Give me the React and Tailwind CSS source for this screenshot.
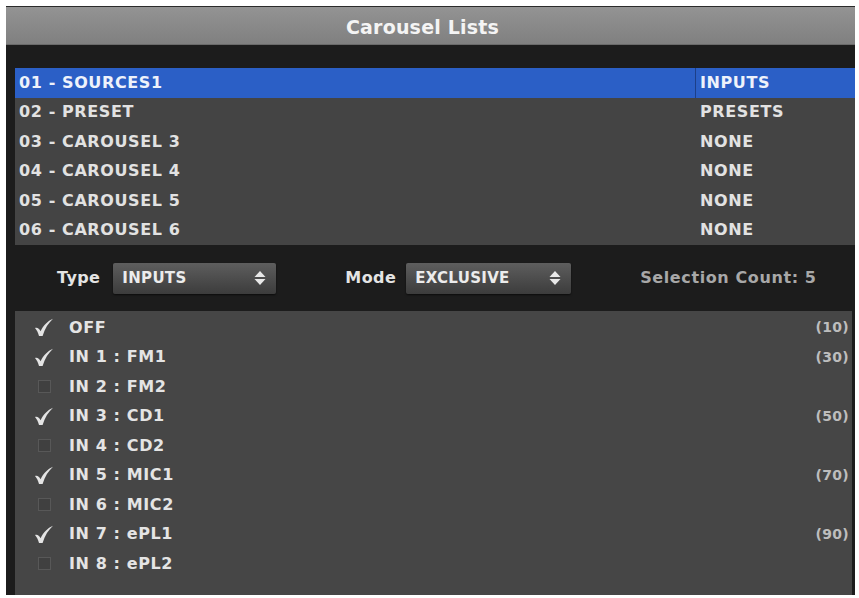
import React from 'react';

const lists = [
    { name: '01 - SOURCES1', type: 'INPUTS', selected: true },
    { name: '02 - PRESET', type: 'PRESETS' },
    { name: '03 - CAROUSEL 3', type: 'NONE' },
    { name: '04 - CAROUSEL 4', type: 'NONE' },
    { name: '05 - CAROUSEL 5', type: 'NONE' },
    { name: '06 - CAROUSEL 6', type: 'NONE' },
];

const inputs = [
    { label: 'OFF', on: true, value: '(10)' },
    { label: 'IN 1 : FM1', on: true, value: '(30)' },
    { label: 'IN 2 : FM2', on: false },
    { label: 'IN 3 : CD1', on: true, value: '(50)' },
    { label: 'IN 4 : CD2', on: false },
    { label: 'IN 5 : MIC1', on: true, value: '(70)' },
    { label: 'IN 6 : MIC2', on: false },
    { label: 'IN 7 : ePL1', on: true, value: '(90)' },
    { label: 'IN 8 : ePL2', on: false },
];

function Arrows() {
    return (
        <svg width="14" height="16" viewBox="0 0 14 16">
            <path d="M7 1 L12.5 7 H1.5 Z" fill="#e8e8e8" />
            <path d="M7 15 L12.5 9 H1.5 Z" fill="#e8e8e8" />
        </svg>
    );
}

function Check() {
    return (
        <svg width="20" height="19" viewBox="0 0 20 19">
            <path d="M1 10 C3.5 9.2 5.2 10.8 6.6 13.2 C9.5 7.5 13.5 3 19 0.8 C14.5 5 10.8 10.5 8.6 18 L5 18 C4.2 14.8 2.8 12 1 10 Z" fill="#e4e4e4" />
        </svg>
    );
}

function Select({ value, width }) {
    return (
        <div className={`flex items-center justify-between h-[31px] pl-[9px] pr-[9px] rounded-[2px] bg-gradient-to-b from-[#5e5e5e] to-[#3c3c3c] shadow-[0_1px_2px_rgba(0,0,0,0.6)] ${width}`}>
            <span className="text-[15px] font-bold tracking-[0.3px] text-[#ececec]">{value}</span>
            <Arrows />
        </div>
    );
}

function App() {
    return (
        <div className="w-[859px] h-[598px] bg-white pt-[6px] pl-[6px] pr-[4px] pb-[3px]" style={{ fontFamily: '"DejaVu Sans", sans-serif' }}>
            <div className="flex flex-col h-full bg-[#1c1c1c] border-t border-[#2a2a2a]">
                <div className="h-[38px] flex items-center justify-center pt-[3px] pr-[16px] bg-gradient-to-b from-[#939393] to-[#808080] border-b border-[#6a6a6a]">
                    <span className="text-[19px] font-bold tracking-[0.2px] text-[#f4f4f4]">Carousel Lists</span>
                </div>

                <div className="pl-[9px] pt-[23px]">
                    <div className="bg-[#444444]">
                        {lists.map((l) => (
                            <div key={l.name} className={`flex h-[29.5px] items-center text-[16px] font-bold tracking-[0.6px] ${l.selected ? 'bg-[#2b5fc6] text-[#eef2fb]' : 'text-[#e2e2e2]'}`}>
                                <div className="w-[680px] pl-[4px]">{l.name}</div>
                                <div className={`pl-[4px] h-full flex items-center ${l.selected ? 'border-l border-[#1d3f88]' : 'border-l border-transparent'}`}>{l.type}</div>
                            </div>
                        ))}
                    </div>
                </div>

                <div className="h-[66px] flex items-center pl-[51px] text-[16px] font-bold tracking-[0.4px]">
                    <span className="text-[#e4e4e4] mr-[13px]">Type</span>
                    <Select value="INPUTS" width="w-[163px]" />
                    <span className="text-[#e4e4e4] ml-[69px] mr-[10px]">Mode</span>
                    <Select value="EXCLUSIVE" width="w-[165px]" />
                    <span className="text-[#a8a8a8] ml-[69px] tracking-[0.6px]">Selection Count: 5</span>
                </div>

                <div className="flex-1 pl-[9px] pr-[3px]">
                    <div className="h-full bg-[#464646] pt-[2px]">
                        {inputs.map((i) => (
                            <div key={i.label} className="flex h-[29.5px] items-center">
                                <div className="w-[48px] flex justify-center pl-[10px]">
                                    {i.on ? (
                                        <Check />
                                    ) : (
                                        <span className="block w-[13px] h-[13px] border border-[#585858] bg-[#404040]"></span>
                                    )}
                                </div>
                                <span className="ml-[6px] text-[16px] font-bold tracking-[0.6px] text-[#e4e4e4]">{i.label}</span>
                                <span className="ml-auto mr-[3px] text-[14px] font-bold tracking-[0.3px] text-[#bdbdbd]">{i.value}</span>
                            </div>
                        ))}
                    </div>
                </div>
            </div>
        </div>
    );
}

export default App;
